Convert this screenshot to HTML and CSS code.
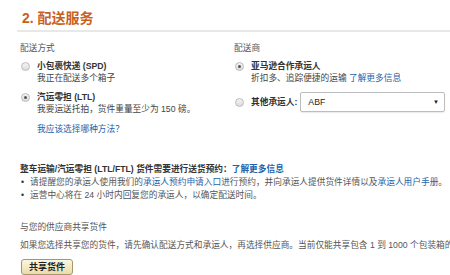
FILE: index.html
```html
<!DOCTYPE html>
<html lang="zh">
<head>
<meta charset="utf-8">
<link rel="stylesheet" href="styles.css">
</head>
<body>
<div class="page">
  <h2 class="heading">2. 配送服务</h2>
  <div class="columns">
    <div class="col col-left">
      <div class="label">配送方式</div>
      <div class="option opt-first">
        <span class="radio"></span>
        <div class="opt-text">
          <div class="opt-title">小包裹快递 (SPD)</div>
          <div>我正在配送多个箱子</div>
        </div>
      </div>
      <div class="option opt-second">
        <span class="radio checked"></span>
        <div class="opt-text">
          <div class="opt-title">汽运零担 (LTL)</div>
          <div>我要运送托拍，货件重量至少为 150 磅。</div>
        </div>
      </div>
      <a class="link help-link">我应该选择哪种方法？</a>
    </div>
    <div class="col col-right">
      <div class="label">配送商</div>
      <div class="option opt-first">
        <span class="radio checked"></span>
        <div class="opt-text">
          <div class="opt-title">亚马逊合作承运人</div>
          <div>折扣多、追踪便捷的运输 <a class="link">了解更多信息</a></div>
        </div>
      </div>
      <div class="option opt-other">
        <span class="radio"></span>
        <span class="opt-title nowrap">其他承运人:</span>
        <div class="select"><span>ABF</span><span class="caret">▼</span></div>
      </div>
    </div>
  </div>
  <div class="appointment">
    <div class="appt-title">整车运输/汽运零担 (LTL/FTL) 货件需要进行送货预约：<a class="link strong">了解更多信息</a></div>
    <ul class="bullets">
      <li>请提醒您的承运人使用我们的<a class="link">承运人预约申请入口</a>进行预约，并向承运人提供货件详情以及<a class="link">承运人用户手册</a>。</li>
      <li>运营中心将在 24 小时内回复您的承运人，以确定配送时间。</li>
    </ul>
  </div>
  <div class="share">
    <div class="share-title">与您的供应商共享货件</div>
    <p class="share-text">如果您选择共享您的货件，请先确认配送方式和承运人，再选择供应商。当前仅能共享包含 1 到 1000 个包装箱的货件。</p>
    <button class="btn">共享货件</button>
  </div>
</div>
</body>
</html>
```
FILE: styles.css
```css
html, body {
  margin: 0;
  padding: 0;
  background: #fff;
  overflow: hidden;
}
body {
  width: 450px;
  height: 275px;
  font-family: "Liberation Sans", "Noto Sans CJK SC", sans-serif;
  font-size: 8.7px;
  line-height: 12px;
  color: #444;
}
.page {
  padding: 10px 0 0 20px;
}
.nowrap {
  white-space: nowrap;
}
.heading {
  margin: 0 0 0 -3px;
  padding: 0 0 4px 5px;
  font-size: 14px;
  line-height: 16px;
  font-weight: bold;
  color: #c8601f;
  border-bottom: 2px solid #e8e8e8;
}
.columns {
  display: flex;
}
.col-left {
  width: 214px;
}
.col-right {
  width: 211px;
}
.label {
  margin-top: 10px;
  color: #555;
}
.option {
  display: flex;
  align-items: flex-start;
  gap: 7px;
}
.opt-first {
  margin-top: 6px;
}
.opt-second {
  margin-top: 7px;
}
.radio {
  flex: none;
  width: 7px;
  height: 7px;
  margin: 2px 0 0 1px;
  border: 1px solid #bbb;
  border-radius: 50%;
  background: linear-gradient(#f4f4f4, #dcdcdc);
  position: relative;
}
.radio.checked::after {
  content: "";
  position: absolute;
  left: 2px;
  top: 2px;
  width: 3px;
  height: 3px;
  border-radius: 50%;
  background: #555;
}
.opt-title {
  font-weight: bold;
  color: #333;
}
.link {
  color: #1d63a8;
}
.link.strong {
  font-weight: bold;
}
.help-link {
  display: block;
  margin: 8px 0 0 17px;
}
.opt-other {
  margin-top: 8px;
  align-items: center;
}
.opt-other .radio {
  margin-top: 0;
}
.select {
  flex: 1;
  margin-left: -4px;
  height: 18px;
  border: 1px solid #bdbdbd;
  border-radius: 2px;
  box-shadow: 0 1px 1px rgba(0,0,0,0.08);
  display: flex;
  align-items: center;
  justify-content: space-between;
  padding: 0 5px 0 7px;
  color: #222;
}
.caret {
  font-size: 6px;
  color: #222;
}
.appointment {
  margin-top: 28px;
  line-height: 13px;
}
.appt-title {
  font-weight: bold;
  color: #333;
}
.bullets {
  margin: 0;
  padding: 0;
  list-style: none;
}
.bullets li {
  position: relative;
  padding-left: 10px;
  color: #555;
  white-space: nowrap;
}
.bullets li::before {
  content: "•";
  position: absolute;
  left: 1px;
  top: 0;
  color: #333;
}
.share {
  margin-top: 19px;
}
.share-title {
  color: #555;
}
.share-text {
  margin: 6px 0 0 0;
  white-space: nowrap;
  color: #555;
}
.btn {
  margin: 8px 0 0 1px;
  padding: 0 7px;
  height: 16px;
  font-family: inherit;
  font-size: 9px;
  line-height: 14px;
  font-weight: bold;
  color: #222;
  border: 1px solid #a6976a;
  border-radius: 3px;
  background: linear-gradient(#fcf6e0, #eadcaa);
  display: block;
}
```
